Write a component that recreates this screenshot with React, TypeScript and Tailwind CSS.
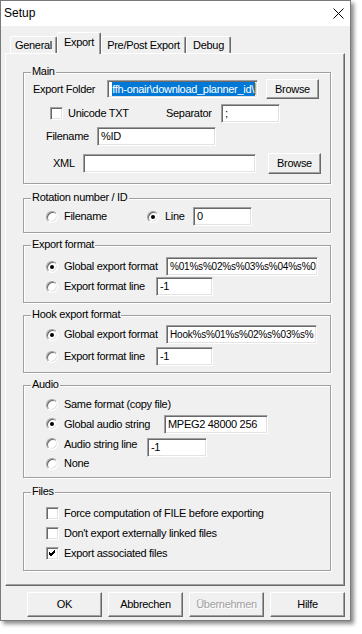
import React from 'react';

const font = "font-['Liberation_Sans',Arial,sans-serif]";

function Field({ className, children }: { className: string; children?: React.ReactNode }) {
  return (
    <div
      className={`flex items-center shrink-0 overflow-hidden whitespace-nowrap bg-white border border-t-[#a0a0a0] border-l-[#a0a0a0] border-r-white border-b-white shadow-[inset_1px_1px_0_#696969,inset_-1px_-1px_0_#e3e3e3] pl-[3px] ${className}`}
    >
      {children}
    </div>
  );
}

function Button({ className, children, disabled }: { className: string; children: React.ReactNode; disabled?: boolean }) {
  return (
    <div
      className={`flex items-center justify-center shrink-0 bg-[#f0f0f0] border border-t-white border-l-white border-r-[#696969] border-b-[#696969] shadow-[inset_-1px_-1px_0_#a0a0a0] ${
        disabled ? 'text-[#a0a0a0] [text-shadow:1px_1px_0_#fff]' : 'text-black'
      } ${className}`}
    >
      {children}
    </div>
  );
}

function Radio({ checked }: { checked?: boolean }) {
  return (
    <span className="flex items-center justify-center shrink-0 w-3 h-3 rounded-full bg-white border border-t-[#a0a0a0] border-l-[#a0a0a0] border-r-white border-b-white shadow-[inset_1px_1px_0_#696969,inset_-1px_-1px_0_#e3e3e3]">
      {checked && <span className="w-1 h-1 rounded-full bg-black" />}
    </span>
  );
}

function Check({ checked }: { checked?: boolean }) {
  return (
    <span className="flex items-center justify-center shrink-0 w-[13px] h-[13px] bg-white border border-t-[#a0a0a0] border-l-[#a0a0a0] border-r-white border-b-white shadow-[inset_1px_1px_0_#696969,inset_-1px_-1px_0_#e3e3e3]">
      {checked && (
        <svg width="7" height="7" viewBox="0 0 7 7">
          <path d="M0 2 L2 4 L6 0 M0 3 L2 5 L6 1 M0 4 L2 6 L6 2" stroke="#000" strokeWidth="1" fill="none" shapeRendering="crispEdges" />
        </svg>
      )}
    </span>
  );
}

function Group({ label, className, children }: { label: string; className: string; children: React.ReactNode }) {
  return (
    <div className={`relative w-[308px] border border-[#a0a0a0] shadow-[inset_1px_1px_0_#fff,1px_1px_0_#fff] ${className}`}>
      <span className="absolute -top-[8px] left-[7px] px-[1px] bg-[#f0f0f0] leading-[13px]">{label}</span>
      {children}
    </div>
  );
}

function Tab({ label, active, className }: { label: string; active?: boolean; className: string }) {
  return (
    <div
      className={`flex justify-center shrink-0 rounded-t-[2px] bg-[#f0f0f0] border-l border-t border-l-white border-t-white border-r border-r-[#696969] shadow-[inset_-1px_0_0_#a0a0a0] ${
        active ? 'relative z-10 h-[22px] -mb-[1px] pt-[3px]' : 'h-[17px] pt-[2px]'
      } ${className}`}
    >
      {label}
    </div>
  );
}

export default function App() {
  return (
    <div className={`w-[362px] h-[634px] bg-white text-[11px] tracking-[-0.3px] leading-[13px] text-black ${font}`}>
      <div className="w-[351px] h-[621px] flex flex-col bg-[#f0f0f0] border border-[#7a7a7a] shadow-[3px_3px_4px_rgba(0,0,0,0.45)]">
        {/* Title bar */}
        <div className="h-[25px] bg-white flex items-center justify-between pl-[3px] pr-[6px]">
          <span className="text-[12px] tracking-normal">Setup</span>
          <svg width="11" height="11" viewBox="0 0 11 11">
            <path d="M0.5 0.5 L10.5 10.5 M10.5 0.5 L0.5 10.5" stroke="#000" strokeWidth="1" />
          </svg>
        </div>

        {/* Tabs */}
        <div className="pt-[7px] pl-[9px] flex items-end h-[27px]">
          <Tab label="General" className="w-[47px]" />
          <Tab label="Export" active className="w-[44px]" />
          <Tab label="Pre/Post Export" className="w-[85px]" />
          <Tab label="Debug" className="w-[45px]" />
        </div>

        {/* Tab panel */}
        <div className="ml-[4px] w-[340px] h-[533px] flex flex-col pl-[17px] border border-t-white border-l-white border-r-[#696969] border-b-[#696969] shadow-[inset_-1px_-1px_0_#a0a0a0]">
          <Group label="Main" className="mt-[18px] h-[112px]">
            <div className="mt-[6px] h-[20px] flex items-center">
              <span className="ml-[9px] w-[74px]">Export Folder</span>
              <Field className="w-[151px] h-[18px] justify-end pl-[1px] pr-[1px]">
                <span className="h-[14px] flex items-center bg-[#0078d7] text-white pr-[1px]">ffh-onair\download_planner_id\</span>
                <span className="w-[1px] h-[12px] bg-[#f0a020] shrink-0" />
              </Field>
              <Button className="ml-[8px] w-[53px] h-[20px]">Browse</Button>
            </div>
            <div className="mt-[5px] h-[19px] flex items-center">
              <span className="ml-[26px]"><Check /></span>
              <span className="ml-[5px] w-[98px]">Unicode TXT</span>
              <span className="w-[55px]">Separator</span>
              <Field className="w-[59px] h-[19px]">;</Field>
            </div>
            <div className="mt-[4px] h-[19px] flex items-center">
              <span className="ml-[22px] w-[51px]">Filename</span>
              <Field className="w-[119px] h-[19px]">%ID</Field>
            </div>
            <div className="mt-[7px] h-[21px] flex items-center">
              <span className="ml-[29px] w-[30px]">XML</span>
              <Field className="w-[173px] h-[19px]" />
              <Button className="ml-[12px] w-[53px] h-[21px]">Browse</Button>
            </div>
          </Group>

          <Group label="Rotation number / ID" className="mt-[14px] h-[35px]">
            <div className="mt-[8px] h-[19px] flex items-center">
              <span className="ml-[22px]"><Radio /></span>
              <span className="ml-[6px] w-[83px]">Filename</span>
              <Radio checked />
              <span className="ml-[6px] w-[28px]">Line</span>
              <Field className="w-[59px] h-[19px]">0</Field>
            </div>
          </Group>

          <Group label="Export format" className="mt-[12px] h-[58px]">
            <div className="mt-[11px] h-[19px] flex items-center">
              <span className="ml-[22px]"><Radio checked /></span>
              <span className="ml-[6px] w-[102px]">Global export format</span>
              <Field className="w-[152px] h-[19px] text-[10px] tracking-[-0.2px]">%01%s%02%s%03%s%04%s%0</Field>
            </div>
            <div className="mt-[1px] h-[19px] flex items-center">
              <span className="ml-[22px]"><Radio /></span>
              <span className="ml-[6px] w-[92px]">Export format line</span>
              <Field className="w-[57px] h-[19px]">-1</Field>
            </div>
          </Group>

          <Group label="Hook export format" className="mt-[12px] h-[58px]">
            <div className="mt-[9px] h-[19px] flex items-center">
              <span className="ml-[22px]"><Radio checked /></span>
              <span className="ml-[6px] w-[102px]">Global export format</span>
              <Field className="w-[151px] h-[19px] text-[10px] tracking-[-0.2px]">Hook%s%01%s%02%s%03%s%</Field>
            </div>
            <div className="mt-[3px] h-[19px] flex items-center">
              <span className="ml-[22px]"><Radio /></span>
              <span className="ml-[6px] w-[92px]">Export format line</span>
              <Field className="w-[57px] h-[19px]">-1</Field>
            </div>
          </Group>

          <Group label="Audio" className="mt-[12px] h-[93px]">
            <div className="mt-[9px] h-[19px] flex items-center">
              <span className="ml-[22px]"><Radio /></span>
              <span className="ml-[6px]">Same format (copy file)</span>
            </div>
            <div className="h-[20px] flex items-center">
              <span className="ml-[22px]"><Radio checked /></span>
              <span className="ml-[6px] w-[100px]">Global audio string</span>
              <Field className="w-[104px] h-[19px]">MPEG2 48000 256</Field>
            </div>
            <div className="h-[20px] flex items-center">
              <span className="ml-[22px]"><Radio /></span>
              <span className="ml-[6px] w-[83px]">Audio string line</span>
              <Field className="w-[60px] h-[19px] mt-[6px]">-1</Field>
            </div>
            <div className="h-[19px] flex items-center">
              <span className="ml-[22px]"><Radio /></span>
              <span className="ml-[6px]">None</span>
            </div>
          </Group>

          <Group label="Files" className="mt-[14px] h-[79px]">
            <div className="mt-[10px] h-[20px] flex items-center">
              <span className="ml-[22px]"><Check /></span>
              <span className="ml-[5px]">Force computation of FILE before exporting</span>
            </div>
            <div className="h-[20px] flex items-center">
              <span className="ml-[22px]"><Check /></span>
              <span className="ml-[5px]">Don't export externally linked files</span>
            </div>
            <div className="h-[21px] flex items-center">
              <span className="ml-[22px]"><Check checked /></span>
              <span className="ml-[5px]">Export associated files</span>
            </div>
          </Group>
        </div>

        {/* Dialog buttons */}
        <div className="mt-[6px] ml-[26px] flex gap-[6px]">
          <Button className="w-[75px] h-[25px] border-black shadow-[inset_-1px_-1px_0_#696969,inset_1px_1px_0_#fff]">OK</Button>
          <Button className="w-[75px] h-[25px]">Abbrechen</Button>
          <Button disabled className="w-[75px] h-[25px]">Übernehmen</Button>
          <Button className="w-[75px] h-[25px]">Hilfe</Button>
        </div>
      </div>
    </div>
  );
}
